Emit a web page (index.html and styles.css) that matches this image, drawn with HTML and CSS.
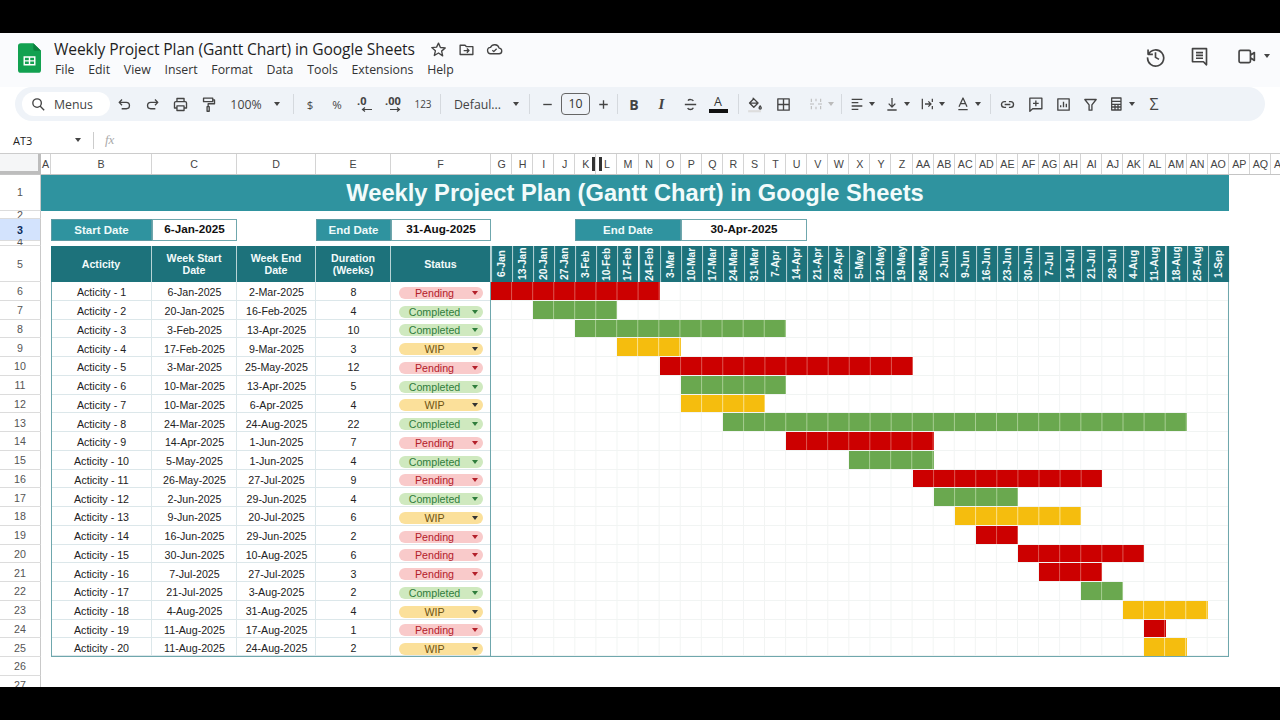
FILE: index.html
```html
<!DOCTYPE html>
<html lang="en">
<head>
<meta charset="utf-8">
<title>Weekly Project Plan (Gantt Chart) in Google Sheets</title>
<link rel="stylesheet" href="styles.css">
</head>
<body>
<div class="app">
  <header class="top">
    <svg class="logo" viewBox="0 0 24 31"><path d="M3 0h13l8 8v20a3 3 0 0 1-3 3H3a3 3 0 0 1-3-3V3a3 3 0 0 1 3-3z" fill="#12a150"/><path d="M16 0l8 8h-6a2 2 0 0 1-2-2z" fill="#0b7f3d"/><path d="M6.5 14.500h11v8h-11zM6.500 18.500h11M12 14.500v8" fill="none" stroke="#fff" stroke-width="1.500"/></svg>
    <div class="doc">
      <div class="doc-title"><span class="doc-name">Weekly Project Plan (Gantt Chart) in Google Sheets</span>
        <svg class="i star" viewBox="0 0 24 24"><path d="M12 3l2.700 6.200 6.800.6-5.100 4.500 1.500 6.700L12 17l-5.900 3.500 1.500-6.700-5.100-4.500 6.800-.6z"/></svg>
        <svg class="i folder" viewBox="0 0 24 24"><path d="M3 6h7l2 2h9v11H3zM8 13.500h7M12.500 10.500l3 3-3 3"/></svg>
        <svg class="i cloud" viewBox="0 0 24 24"><path d="M7 18a4.500 4.500 0 0 1-.6-9A6.500 6.500 0 0 1 18.500 10a4 4 0 0 1-.5 8zM9 13l2 2 4-4"/></svg>
      </div>
      <nav class="menu"><span>File</span><span>Edit</span><span>View</span><span>Insert</span><span>Format</span><span>Data</span><span>Tools</span><span>Extensions</span><span>Help</span></nav>
    </div>
    <div class="top-actions">
      <svg class="i big" viewBox="0 0 24 24"><path d="M3.500 4v5.500H9M4 9.500A9.200 9.200 0 1 1 3 13M12 7v6l4 2.300"/></svg>
      <svg class="i big" viewBox="0 0 24 24"><path d="M4 3h16v18.500L16.500 18H4zM8 7.500h8M8 10.800h8M8 14h8"/></svg>
      <svg class="i big" viewBox="0 0 24 24"><path d="M5 5h10a1.500 1.500 0 0 1 1.500 1.500v11A1.500 1.500 0 0 1 15 19H5a1.500 1.500 0 0 1-1.500-1.500v-11A1.500 1.500 0 0 1 5 5zM16.500 10.500L21 7.500v9l-4.500-3"/></svg>
      <span class="caret"></span>
    </div>
  </header>

  <div class="toolbar">
    <div class="search"><svg class="i" viewBox="0 0 24 24"><path d="M10 4a6 6 0 1 1 0 12 6 6 0 0 1 0-12zM14.500 14.500L20 20"/></svg><span>Menus</span></div>
    <svg class="i" viewBox="0 0 24 24"><path d="M5 9h9.500a4.500 4.500 0 0 1 0 9H8M8.500 5L4.500 9l4 4"/></svg>
    <svg class="i" viewBox="0 0 24 24"><path d="M19 9H9.500a4.500 4.500 0 0 0 0 9H16M15.500 5l4 4-4 4"/></svg>
    <svg class="i" viewBox="0 0 24 24"><path d="M7 8V3.500h10V8M7 17H3.500v-7A2 2 0 0 1 5.500 8h13a2 2 0 0 1 2 2v7H17M7 14h10v6.500H7z"/></svg>
    <svg class="i" viewBox="0 0 24 24"><path d="M5 3h13v5H5zM18 5.500h2.500v5.500H11.500v4M10 15h3v6.500h-3z"/></svg>
    <span class="t">100%</span><span class="caret"></span><span class="sep"></span>
    <span class="t sm">$</span><span class="t sm">%</span>
    <span class="dec">.0<svg viewBox="0 0 12 5"><path d="M11 2.500H2M4 .5l-2.500 2L4 4.500"/></svg></span>
    <span class="dec">.00<svg viewBox="0 0 12 5"><path d="M1 2.500h9M8 .5l2.500 2L8 4.500"/></svg></span>
    <span class="t xs">123</span><span class="sep"></span>
    <span class="t">Defaul...</span><span class="caret"></span><span class="sep"></span>
    <svg class="i" viewBox="0 0 24 24"><path d="M6 12h12"/></svg>
    <span class="size">10</span>
    <svg class="i" viewBox="0 0 24 24"><path d="M6 12h12M12 6v12"/></svg>
    <span class="sep"></span>
    <span class="fmt bold">B</span><span class="fmt ital">I</span>
    <svg class="i" viewBox="0 0 24 24"><path d="M4 12h16M16 7c-1-2-6-3-7.500-.5M8 17c1 2.500 6.500 3 8-.5"/></svg>
    <span class="color">A</span><span class="sep"></span>
    <svg class="i" viewBox="0 0 24 24"><path d="M10 3l7 7-6 6-6-6 6-6zM5 10h12M20 14c1 1.500 1.500 2.200 1.500 3a1.500 1.500 0 0 1-3 0c0-.8.500-1.500 1.500-3z"/><path class="swatch" d="M3 21.500h18"/></svg>
    <svg class="i" viewBox="0 0 24 24"><path d="M4 4h16v16H4zM12 4v16M4 12h16"/></svg>
    <div class="group off"><svg class="i" viewBox="0 0 24 24"><path d="M5 4v5M5 15v5M12 4v4M12 16v4M19 4v5M19 15v5M3 12h6M15 12h6"/></svg><span class="caret"></span></div>
    <span class="sep"></span>
    <div class="group"><svg class="i" viewBox="0 0 24 24"><path d="M4 5h16M4 10h10M4 15h16M4 20h10"/></svg><span class="caret"></span></div>
    <div class="group"><svg class="i" viewBox="0 0 24 24"><path d="M12 3v13M7 11.500l5 5 5-5M5 21h14"/></svg><span class="caret"></span></div>
    <div class="group"><svg class="i" viewBox="0 0 24 24"><path d="M5 4v16M20 4v5M20 15v5M9 12h9M14 8l4 4-4 4"/></svg><span class="caret"></span></div>
    <div class="group"><svg class="i" viewBox="0 0 24 24"><path d="M6 16L12 3l6 13M8 11.500h8M5 20.500h14"/></svg><span class="caret"></span></div>
    <span class="sep"></span>
    <svg class="i" viewBox="0 0 24 24"><path d="M10 8H7.500a4 4 0 0 0 0 8H10M14 8h2.500a4 4 0 0 1 0 8H14M8 12h8"/></svg>
    <svg class="i" viewBox="0 0 24 24"><path d="M4 3h17v15H8l-4 3.500zM12.500 6.500v8M8.500 10.500h8"/></svg>
    <svg class="i" viewBox="0 0 24 24"><path d="M4 4h16v16H4zM8 16v-3M12 16V8M16 16v-5"/></svg>
    <svg class="i" viewBox="0 0 24 24"><path d="M4 5h16l-6 7.500V20h-4v-7.500z"/></svg>
    <div class="group"><svg class="i" viewBox="0 0 24 24"><path d="M4 3h14v18H4zM4 8h14M4 12.500h14M4 16.500h14M9 12.500V21M13.500 12.500V21"/></svg><span class="caret"></span></div>
    <span class="fmt sigma">Σ</span>
  </div>

  <div class="formula">
    <span class="ref">AT3</span><span class="caret"></span><span class="fsep"></span><span class="fx">fx</span>
  </div>

  <main class="sheet">
    <div class="colhead">
      <span class="corner"></span><span class="ch">A</span><span class="ch">B</span><span class="ch">C</span><span class="ch">D</span><span class="ch">E</span><span class="ch">F</span>
      <div class="chw"><span class="ch">G</span><span class="ch">H</span><span class="ch">I</span><span class="ch">J</span><span class="ch">K</span><span class="ch">L</span><span class="ch">M</span><span class="ch">N</span><span class="ch">O</span><span class="ch">P</span><span class="ch">Q</span><span class="ch">R</span><span class="ch">S</span><span class="ch">T</span><span class="ch">U</span><span class="ch">V</span><span class="ch">W</span><span class="ch">X</span><span class="ch">Y</span><span class="ch">Z</span><span class="ch">AA</span><span class="ch">AB</span><span class="ch">AC</span><span class="ch">AD</span><span class="ch">AE</span><span class="ch">AF</span><span class="ch">AG</span><span class="ch">AH</span><span class="ch">AI</span><span class="ch">AJ</span><span class="ch">AK</span><span class="ch">AL</span><span class="ch">AM</span><span class="ch">AN</span><span class="ch">AO</span><span class="ch">AP</span><span class="ch">AQ</span><span class="ch">AR</span></div>
      <span class="grip"></span>
    </div>

    <div class="row r1"><span class="rh">1</span><h1 class="title">Weekly Project Plan (Gantt Chart) in Google Sheets</h1></div>
    <div class="row r2"><span class="rh">2</span></div>
    <div class="row r3"><span class="rh sel">3</span><span></span><span class="lab">Start Date</span><span class="val">6-Jan-2025</span><span></span><span class="lab">End Date</span><span class="val">31-Aug-2025</span><span></span><span class="lab">End Date</span><span class="val">30-Apr-2025</span></div>
    <div class="row r4"><span class="rh">4</span></div>
    <div class="row r5"><span class="rh">5</span><span></span><span class="hd">Acticity</span><span class="hd">Week Start Date</span><span class="hd">Week End Date</span><span class="hd">Duration (Weeks)</span><span class="hd">Status</span>
      <div class="weeks"><b>6-Jan</b><b>13-Jan</b><b>20-Jan</b><b>27-Jan</b><b>3-Feb</b><b>10-Feb</b><b>17-Feb</b><b>24-Feb</b><b>3-Mar</b><b>10-Mar</b><b>17-Mar</b><b>24-Mar</b><b>31-Mar</b><b>7-Apr</b><b>14-Apr</b><b>21-Apr</b><b>28-Apr</b><b>5-May</b><b>12-May</b><b>19-May</b><b>26-May</b><b>2-Jun</b><b>9-Jun</b><b>16-Jun</b><b>23-Jun</b><b>30-Jun</b><b>7-Jul</b><b>14-Jul</b><b>21-Jul</b><b>28-Jul</b><b>4-Aug</b><b>11-Aug</b><b>18-Aug</b><b>25-Aug</b><b>1-Sep</b></div>
    </div>

    <div class="rows">
      <div class="row d"><span class="rh">6</span><span></span><span class="c first">Acticity - 1</span><span class="c">6-Jan-2025</span><span class="c">2-Mar-2025</span><span class="c">8</span><span class="c st"><span class="pill pending">Pending</span></span><div class="gantt"><i class="bar red" style="grid-column:1/span 8"></i></div></div>
      <div class="row d"><span class="rh">7</span><span></span><span class="c first">Acticity - 2</span><span class="c">20-Jan-2025</span><span class="c">16-Feb-2025</span><span class="c">4</span><span class="c st"><span class="pill completed">Completed</span></span><div class="gantt"><i class="bar green" style="grid-column:3/span 4"></i></div></div>
      <div class="row d"><span class="rh">8</span><span></span><span class="c first">Acticity - 3</span><span class="c">3-Feb-2025</span><span class="c">13-Apr-2025</span><span class="c">10</span><span class="c st"><span class="pill completed">Completed</span></span><div class="gantt"><i class="bar green" style="grid-column:5/span 10"></i></div></div>
      <div class="row d"><span class="rh">9</span><span></span><span class="c first">Acticity - 4</span><span class="c">17-Feb-2025</span><span class="c">9-Mar-2025</span><span class="c">3</span><span class="c st"><span class="pill wip">WIP</span></span><div class="gantt"><i class="bar yellow" style="grid-column:7/span 3"></i></div></div>
      <div class="row d"><span class="rh">10</span><span></span><span class="c first">Acticity - 5</span><span class="c">3-Mar-2025</span><span class="c">25-May-2025</span><span class="c">12</span><span class="c st"><span class="pill pending">Pending</span></span><div class="gantt"><i class="bar red" style="grid-column:9/span 12"></i></div></div>
      <div class="row d"><span class="rh">11</span><span></span><span class="c first">Acticity - 6</span><span class="c">10-Mar-2025</span><span class="c">13-Apr-2025</span><span class="c">5</span><span class="c st"><span class="pill completed">Completed</span></span><div class="gantt"><i class="bar green" style="grid-column:10/span 5"></i></div></div>
      <div class="row d"><span class="rh">12</span><span></span><span class="c first">Acticity - 7</span><span class="c">10-Mar-2025</span><span class="c">6-Apr-2025</span><span class="c">4</span><span class="c st"><span class="pill wip">WIP</span></span><div class="gantt"><i class="bar yellow" style="grid-column:10/span 4"></i></div></div>
      <div class="row d"><span class="rh">13</span><span></span><span class="c first">Acticity - 8</span><span class="c">24-Mar-2025</span><span class="c">24-Aug-2025</span><span class="c">22</span><span class="c st"><span class="pill completed">Completed</span></span><div class="gantt"><i class="bar green" style="grid-column:12/span 22"></i></div></div>
      <div class="row d"><span class="rh">14</span><span></span><span class="c first">Acticity - 9</span><span class="c">14-Apr-2025</span><span class="c">1-Jun-2025</span><span class="c">7</span><span class="c st"><span class="pill pending">Pending</span></span><div class="gantt"><i class="bar red" style="grid-column:15/span 7"></i></div></div>
      <div class="row d"><span class="rh">15</span><span></span><span class="c first">Acticity - 10</span><span class="c">5-May-2025</span><span class="c">1-Jun-2025</span><span class="c">4</span><span class="c st"><span class="pill completed">Completed</span></span><div class="gantt"><i class="bar green" style="grid-column:18/span 4"></i></div></div>
      <div class="row d"><span class="rh">16</span><span></span><span class="c first">Acticity - 11</span><span class="c">26-May-2025</span><span class="c">27-Jul-2025</span><span class="c">9</span><span class="c st"><span class="pill pending">Pending</span></span><div class="gantt"><i class="bar red" style="grid-column:21/span 9"></i></div></div>
      <div class="row d"><span class="rh">17</span><span></span><span class="c first">Acticity - 12</span><span class="c">2-Jun-2025</span><span class="c">29-Jun-2025</span><span class="c">4</span><span class="c st"><span class="pill completed">Completed</span></span><div class="gantt"><i class="bar green" style="grid-column:22/span 4"></i></div></div>
      <div class="row d"><span class="rh">18</span><span></span><span class="c first">Acticity - 13</span><span class="c">9-Jun-2025</span><span class="c">20-Jul-2025</span><span class="c">6</span><span class="c st"><span class="pill wip">WIP</span></span><div class="gantt"><i class="bar yellow" style="grid-column:23/span 6"></i></div></div>
      <div class="row d"><span class="rh">19</span><span></span><span class="c first">Acticity - 14</span><span class="c">16-Jun-2025</span><span class="c">29-Jun-2025</span><span class="c">2</span><span class="c st"><span class="pill pending">Pending</span></span><div class="gantt"><i class="bar red" style="grid-column:24/span 2"></i></div></div>
      <div class="row d"><span class="rh">20</span><span></span><span class="c first">Acticity - 15</span><span class="c">30-Jun-2025</span><span class="c">10-Aug-2025</span><span class="c">6</span><span class="c st"><span class="pill pending">Pending</span></span><div class="gantt"><i class="bar red" style="grid-column:26/span 6"></i></div></div>
      <div class="row d"><span class="rh">21</span><span></span><span class="c first">Acticity - 16</span><span class="c">7-Jul-2025</span><span class="c">27-Jul-2025</span><span class="c">3</span><span class="c st"><span class="pill pending">Pending</span></span><div class="gantt"><i class="bar red" style="grid-column:27/span 3"></i></div></div>
      <div class="row d"><span class="rh">22</span><span></span><span class="c first">Acticity - 17</span><span class="c">21-Jul-2025</span><span class="c">3-Aug-2025</span><span class="c">2</span><span class="c st"><span class="pill completed">Completed</span></span><div class="gantt"><i class="bar green" style="grid-column:29/span 2"></i></div></div>
      <div class="row d"><span class="rh">23</span><span></span><span class="c first">Acticity - 18</span><span class="c">4-Aug-2025</span><span class="c">31-Aug-2025</span><span class="c">4</span><span class="c st"><span class="pill wip">WIP</span></span><div class="gantt"><i class="bar yellow" style="grid-column:31/span 4"></i></div></div>
      <div class="row d"><span class="rh">24</span><span></span><span class="c first">Acticity - 19</span><span class="c">11-Aug-2025</span><span class="c">17-Aug-2025</span><span class="c">1</span><span class="c st"><span class="pill pending">Pending</span></span><div class="gantt"><i class="bar red" style="grid-column:32/span 1"></i></div></div>
      <div class="row d last"><span class="rh">25</span><span></span><span class="c first">Acticity - 20</span><span class="c">11-Aug-2025</span><span class="c">24-Aug-2025</span><span class="c">2</span><span class="c st"><span class="pill wip">WIP</span></span><div class="gantt"><i class="bar yellow" style="grid-column:32/span 2"></i></div></div>
      <div class="row d"><span class="rh">26</span></div>
      <div class="row d"><span class="rh">27</span></div>
    </div>
  </main>
</div>
</body>
</html>
```

FILE: styles.css
```css
* { box-sizing: border-box; }
html, body { margin: 0; height: 100%; }
body { background: #000; padding: 33px 0; overflow: hidden; font-family: "Liberation Sans", Arial, sans-serif; }
.app { height: 654px; background: #fff; overflow: hidden; display: flex; flex-direction: column; --teal: #2f939f; --dark: #1d727b; --line: #6fa7ad; --w: 21.0857px; }

/* Title bar */
.top { height: 54px; flex: none; background: #fafbfd; display: flex; padding: 10px 0 0 18px; color: #1f1f1f; }
.logo { width: 23px; height: 30px; flex: none; }
.doc { margin-left: 13px; }
.doc-title { display: flex; align-items: center; height: 15px; margin-top: -1px; }
.doc-name { font: 15.600px/15px "Open Sans", sans-serif; white-space: nowrap; letter-spacing: -.1px; width: 375.500px; }
.star { width: 17px; height: 17px; }
.folder { margin-left: 11px; width: 17px; height: 17px; }
.cloud { margin-left: 11.500px; width: 18px; height: 18px; }
.menu { display: flex; margin-top: 5px; font: 12.300px/16px "Open Sans", sans-serif; color: #333; margin-left: 1px; }
.menu span { margin-right: 13.750px; }
.top-actions { margin-left: auto; display: flex; align-items: center; height: 26px; padding-right: 10.500px; }
.top-actions .big:nth-child(1) { margin-right: 23px; }
.top-actions .big:nth-child(2) { margin-right: 26px; }
.top-actions .big:nth-child(3) { margin-right: 7px; }

/* Icons */
.i { width: 17px; height: 17px; fill: none; stroke: #444; stroke-width: 1.900; stroke-linejoin: round; flex: none; }
.i.big { width: 21px; height: 21px; }
.i .swatch { stroke: #ddd; stroke-width: 3; }
.caret { width: 0; height: 0; border: 3.500px solid transparent; border-top: 4px solid #444; border-bottom: 0; flex: none; }

/* Toolbar */
.toolbar { height: 34px; flex: none; margin: 0 15px; padding-left: 7px; background: #eff3f8; border-radius: 17px; display: grid; align-items: center; justify-items: center;
  grid-template-columns: 88px 28px 28px 29px 26px 50px 12px 20px 14px 40px 16px 40px 20px 14px 61px 16px 10px 26px 31px 24px 4px 30px 25px 33px 22px 18px 14px 44px 31px 10px 32px 38px 32px 40px 4px 30px 27px 28px 27px 35px 30px; }
.search { justify-self: stretch; height: 24px; background: #fff; border-radius: 12px; display: flex; align-items: center; padding-left: 8px; font: 12.300px "Open Sans", sans-serif; color: #444; }
.search span { margin-left: 7px; }
.t { font: 12.300px "Open Sans", sans-serif; color: #444; }
.t.sm { font-size: 11.500px; }
.t.xs { font-size: 10px; }
.sep { width: 1px; height: 20px; background: #d5d9de; }
.dec { font: 700 11px/10px "Open Sans", sans-serif; color: #444; height: 16px; }
.dec svg { display: block; width: 12px; height: 5px; margin: 1px 0 0 4px; fill: none; stroke: #444; stroke-width: 1.200; }
.size { width: 29px; height: 22px; border: 1px solid #666; border-radius: 4px; text-align: center; font: 12.300px/20px "Open Sans", sans-serif; color: #333; }
.fmt { color: #444; }
.fmt.bold { font: 700 14px "Open Sans", sans-serif; }
.fmt.ital { font: italic 700 15px "Liberation Serif", serif; }
.fmt.sigma { font: 500 16px "Open Sans", sans-serif; }
.color { font: 12.500px/14px "Open Sans", sans-serif; color: #333; width: 19px; text-align: center; border-bottom: 4px solid #111; }
.group { display: flex; align-items: center; gap: 4px; }
.group .i { width: 16px; height: 16px; }
.group.off .i { stroke: #bbb; stroke-width: 1.600; }
.group.off .caret { border-top-color: #bbb; }

/* Formula bar */
.formula { height: 33px; flex: none; padding: 6px 0 0 13px; display: flex; align-items: center; background: #fff; border-bottom: 1px solid #ccc; font: 11px "Open Sans", sans-serif; color: #222; }
.ref { width: 62px; }
.fsep { width: 1px; height: 17px; background: #ccc; margin-left: 12px; }
.fx { margin-left: 11px; font: italic 13px "Liberation Serif", serif; color: #aaa; }

/* Sheet */
.sheet { flex: 1; min-height: 0; font-size: 10.670px; color: #222; --cols: 41px 10px 101px 85px 79px 75px 100px 738px 1fr; }
.colhead { position: relative; display: grid; grid-template-columns: 41px 10px 101px 85px 79px 75px 100px 1fr; height: 21px; border-bottom: 1px solid #c4c4c4; overflow: hidden; }
.corner { background: #f5f6f7; border-right: 3px solid #bdbdbd; border-bottom: 3px solid #bdbdbd; }
.chw { display: grid; grid-template-columns: repeat(38, var(--w)); }
.ch { display: flex; align-items: center; justify-content: center; border-right: 1px solid #d4d4d4; color: #444; font-size: 10.670px; white-space: nowrap; }
.chw .ch { padding-left: 1px; }
.grip { position: absolute; left: 592px; top: 3px; width: 10px; height: 14px; border-left: 3px solid #333; border-right: 3px solid #333; }

.row { display: grid; grid-template-columns: var(--cols); }
.r1 { height: 36px; grid-template-columns: 41px 1188px 1fr; }
.r2 { height: 8px; }
.r3 { height: 20px; grid-template-columns: 41px 10px 101px 85px 79px 75px 100px 84px 106px 126px 1fr; }
.r4 { height: 7px; }
.r5 { height: 36px; }
.rows { display: grid; grid-auto-rows: 18.750px; }

.rh { display: flex; align-items: center; justify-content: center; border-right: 1px solid #c9c9c9; border-bottom: 1px solid #dcdcdc; color: #555; font-size: 10.670px; overflow: hidden; }
.d .rh, .r3 .rh { padding-top: 1px; }
.r1 .rh { padding-bottom: 2px; }
.rh.sel { background: #d3e3fd; color: #0b2a5b; font-weight: 700; }

.title { margin: 0; background: var(--teal); color: #f2fbfb; font-size: 23.700px; font-weight: 700; line-height: 36px; text-align: center; }
.lab { background: var(--teal); color: #eefafa; font-weight: 700; font-size: 11.500px; text-align: center; line-height: 22px; box-shadow: inset 0 0 0 1px #5c9aa3; }
.val { background: #fff; color: #111; font-weight: 700; font-size: 11.700px; text-align: center; line-height: 20px; box-shadow: inset 0 0 0 1px #6fa7ad; }

.hd { display: flex; align-items: center; justify-content: center; text-align: center; padding: 0 11px; background: var(--dark); color: #f2fafa; font-weight: 700; line-height: 12.500px; border-right: 1px solid #b8d4d6; }
.weeks { display: grid; grid-template-columns: repeat(35, var(--w)); }
.weeks b { writing-mode: vertical-rl; transform: rotate(180deg); background: var(--dark); color: #f2fafa; font-weight: 700; font-size: 10.300px; line-height: 20px; text-align: center; white-space: nowrap; border-right: 1px solid #b8d4d6; }

.c { display: flex; align-items: center; justify-content: center; padding-top: 2px; color: #222; white-space: nowrap; box-shadow: inset -1px -1px 0 #dce7ea; }
.c.first { box-shadow: inset 1px 0 0 var(--line), inset -1px -1px 0 #dce7ea; }
.c.st { padding-top: 3px; box-shadow: inset -1px 0 0 var(--line), inset 0 -1px 0 #dce7ea; }
.pill { position: relative; width: 84px; height: 12px; margin-left: -1px; border-radius: 6px; font-size: 10.670px; line-height: 12px; padding-right: 12px; text-align: center; }
.pill::after { content: ""; position: absolute; right: 5px; top: 4px; border: 3px solid transparent; border-top: 4px solid currentColor; border-bottom: 0; }
.pending { background: #f9caca; color: #b3202a; }
.completed { background: #cfe9bf; color: #2f7d3c; }
.wip { background: #fbe09a; color: #6e5312; }
.wip::after { color: #333; }

.gantt { display: grid; grid-template-columns: repeat(35, var(--w)); box-shadow: inset -1px 0 0 var(--line); background: linear-gradient(to left, #f1f4f3 1px, transparent 1px) 0 0 / var(--w) 100%, linear-gradient(to top, #f1f4f3 1px, transparent 1px); }
.bar { display: block; height: 17.750px; background-size: var(--w) 100%; }
.red { background-color: #cc0000; background-image: linear-gradient(to left, #de5a55 1px, transparent 1px); }
.green { background-color: #6aa84f; background-image: linear-gradient(to left, #a9cf94 1px, transparent 1px); }
.yellow { background-color: #f5bd0e; background-image: linear-gradient(to left, #fbe391 1px, transparent 1px); }

.last .c, .last .c.first, .last .c.st, .last .gantt { border-bottom: 1px solid var(--line); }
```
